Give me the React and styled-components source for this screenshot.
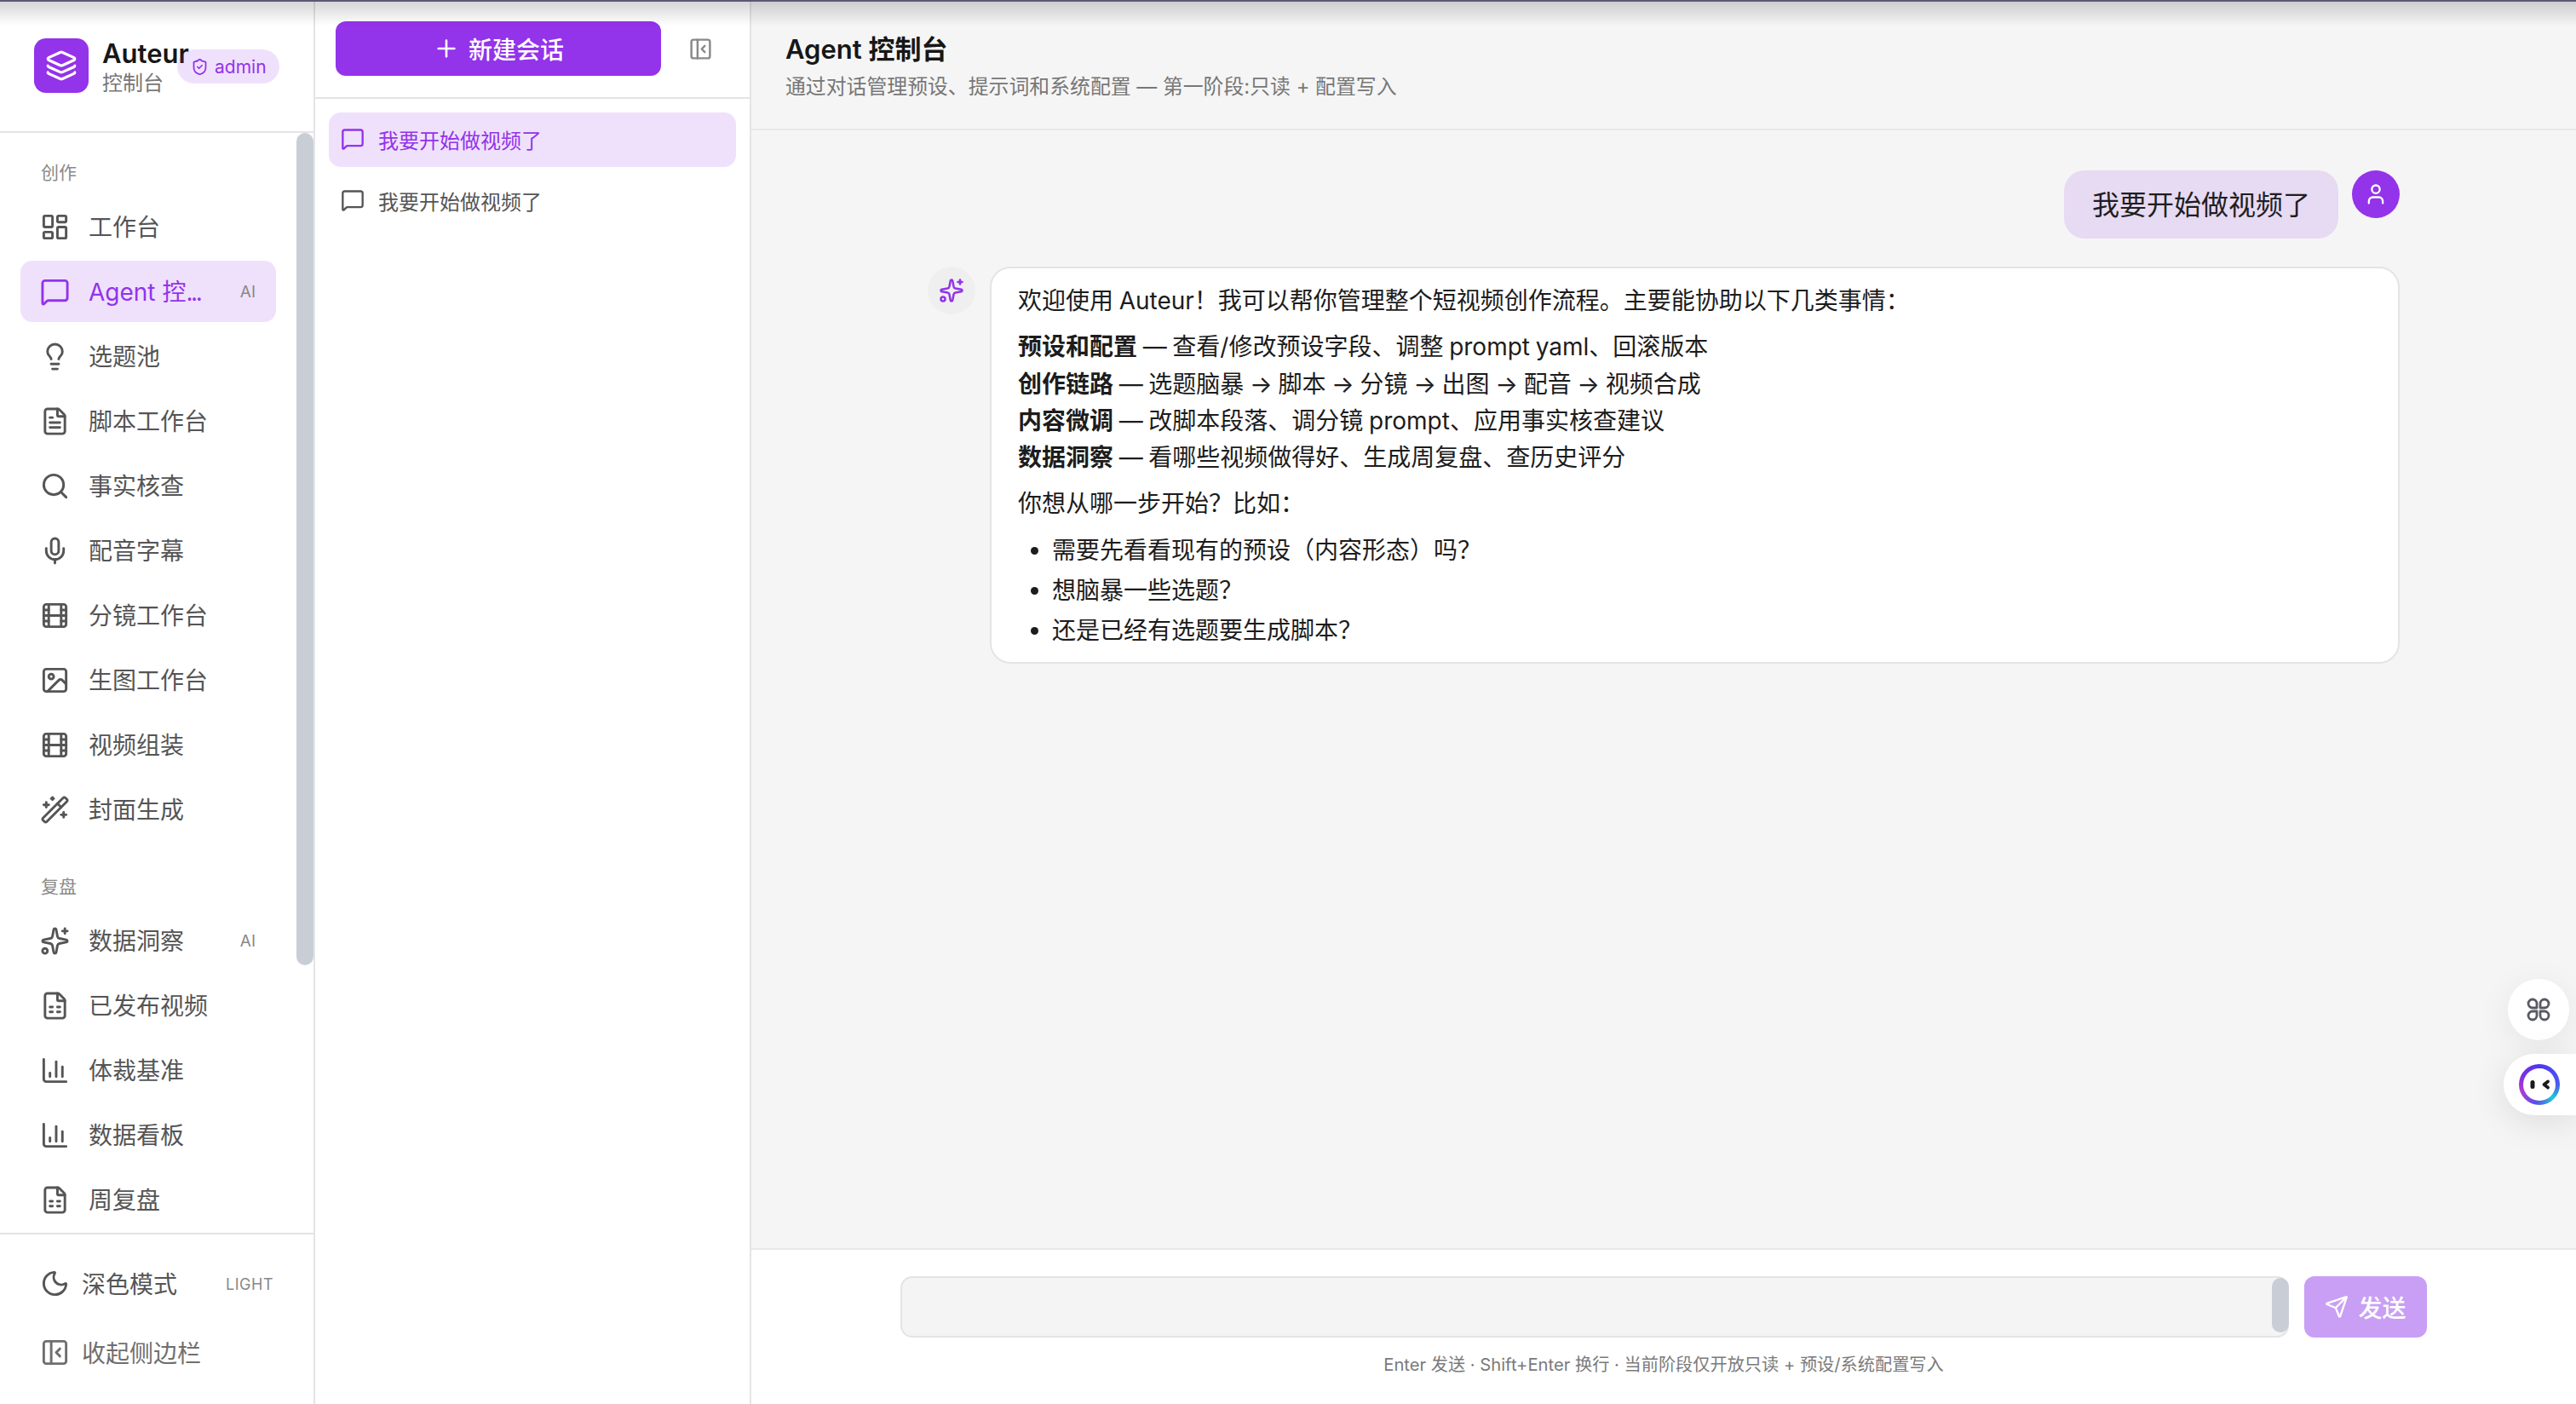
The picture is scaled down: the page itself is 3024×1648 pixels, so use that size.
import React from 'react'
import styled, { createGlobalStyle } from 'styled-components'
import {
  LayoutDashboard, MessageSquare, Lightbulb, FileText, Search, Mic, Film, Image as ImageIcon,
  WandSparkles, Sparkles, FileSpreadsheet, ChartColumn, Moon, PanelLeftClose, Plus, ShieldCheck,
  Layers, User, Send,
} from 'lucide-react'

const GlobalStyle = createGlobalStyle`
  html, body { margin: 0; height: 100%; }
  body {
    font-family: Inter, "Noto Sans CJK SC", sans-serif;
    color: #1a1a1a;
    background: #fff;
  }
  * { box-sizing: border-box; }
`

const Shell = styled.div`
  display: grid;
  grid-template-columns: 370px 512px 1fr;
  height: 100vh;
  overflow: hidden;
`

const TopShade = styled.div`
  position: fixed;
  top: 0;
  left: 0;
  right: 0;
  height: 30px;
  border-top: 2px solid #5d5878;
  background: linear-gradient(to bottom, rgba(0, 0, 0, 0.16), rgba(0, 0, 0, 0));
  pointer-events: none;
  z-index: 5;
`

/* left nav */
const Sidebar = styled.aside`
  display: flex;
  flex-direction: column;
  min-height: 0;
  background: #fff;
  border-right: 2px solid #e4e4e7;
`

const Brand = styled.div`
  display: flex;
  align-items: center;
  height: 156px;
  flex-shrink: 0;
  padding-left: 40px;
  border-bottom: 2px solid #e4e4e7;
`

const BrandTile = styled.div`
  display: flex;
  align-items: center;
  justify-content: center;
  width: 64px;
  height: 64px;
  border-radius: 14px;
  background: #9333ea;
  color: #fff;
  flex-shrink: 0;
`

const BrandText = styled.div`
  width: 88px;
  margin-left: 16px;
  padding-top: 6px;
  white-space: nowrap;
`

const BrandName = styled.div`
  font-size: 31px;
  line-height: 36px;
  font-weight: 600;
  color: #171717;
`

const BrandSub = styled.div`
  font-size: 24px;
  line-height: 34px;
  color: #777;
`

const RoleBadge = styled.div`
  display: flex;
  align-items: center;
  gap: 7px;
  height: 40px;
  padding: 0 15px 0 16px;
  margin-top: 2px;
  border-radius: 20px;
  background: rgba(147, 51, 234, 0.15);
  color: #9333ea;
  font-size: 21px;
`

const NavPane = styled.div`
  position: relative;
  flex: 1;
  min-height: 0;
  overflow: hidden;
`

const NavThumb = styled.div`
  position: absolute;
  top: 0;
  right: 0;
  width: 20px;
  height: 977px;
  border-radius: 10px;
  background: #c9ced6;
`

const Nav = styled.nav`
  padding: 33px 24px 0;
`

const GroupLabel = styled.div`
  height: 28px;
  margin: 0 0 13px 24px;
  font-size: 21px;
  line-height: 28px;
  color: #8a8a8a;
`

const NavGroup = styled.div`
  display: flex;
  flex-direction: column;
  gap: 4px;
  width: 300px;
  margin-bottom: 41px;
`

const NavItem = styled.a`
  display: flex;
  align-items: center;
  gap: 22px;
  height: 72px;
  padding: 0 24px 0 23px;
  border-radius: 14px;
  font-size: 28px;
  white-space: nowrap;
  color: ${p => (p.$active ? '#9333ea' : '#555')};
  background: ${p => (p.$active ? 'rgba(147, 51, 234, 0.15)' : 'transparent')};
  svg { flex-shrink: 0; }
`

const NavLabel = styled.span`
  flex: 1;
  padding-bottom: 2px;
`

const CutDots = styled.span`
  letter-spacing: -2.4px;
`

const AiTag = styled.span`
  font-size: 19px;
  color: #888;
`

const SideFooter = styled.div`
  display: flex;
  flex-direction: column;
  gap: 9px;
  flex-shrink: 0;
  height: 201px;
  padding: 21px 47px 0 24px;
  border-top: 2px solid #e4e4e7;
`

const FooterRow = styled.div`
  display: flex;
  align-items: center;
  gap: 14px;
  height: 72px;
  padding-left: 23px;
  font-size: 28px;
  white-space: nowrap;
  color: ${p => (p.$muted ? '#6f6f6f' : '#555')};
`

const ModeTag = styled.span`
  margin: 2px 0 0 auto;
  font-size: 18px;
  letter-spacing: 0.5px;
  color: #888;
`

/* session list */
const Sessions = styled.section`
  display: flex;
  flex-direction: column;
  min-height: 0;
  background: #fff;
  border-right: 2px solid #e4e4e7;
`

const SessionsHead = styled.div`
  display: flex;
  align-items: center;
  height: 116px;
  padding-left: 24px;
  gap: 32px;
  border-bottom: 2px solid #e4e4e7;
`

const NewChat = styled.button`
  display: flex;
  align-items: center;
  justify-content: center;
  gap: 10px;
  width: 382px;
  height: 64px;
  border: 0;
  border-radius: 12px;
  background: #9333ea;
  color: #fff;
  font: 500 28px Inter, "Noto Sans CJK SC", sans-serif;
`

const CollapseBtn = styled.span`
  display: flex;
  color: #888;
`

const SessionList = styled.div`
  display: flex;
  flex-direction: column;
  gap: 8px;
  padding: 16px 16px 0;
`

const SessionItem = styled.div`
  display: flex;
  align-items: center;
  gap: 16px;
  height: 64px;
  padding: 0 0 2px 14px;
  border-radius: 14px;
  font-size: 24px;
  color: ${p => (p.$active ? '#9333ea' : '#555')};
  background: ${p => (p.$active ? 'rgba(147, 51, 234, 0.15)' : 'transparent')};
`

/* chat */
const Main = styled.main`
  display: flex;
  flex-direction: column;
  min-width: 0;
  min-height: 0;
  background: #f5f5f5;
`

const MainHead = styled.header`
  display: flex;
  flex-direction: column;
  justify-content: center;
  height: 153px;
  flex-shrink: 0;
  padding: 7px 40px 0;
  background: #f5f5f5;
  border-bottom: 2px solid #e8e8ea;
`

const Title = styled.h1`
  margin: 0 0 2px;
  font-size: 31px;
  line-height: 44px;
  font-weight: 600;
  color: #171717;
`

const Subtitle = styled.p`
  margin: 0;
  font-size: 23.87px;
  line-height: 40px;
  color: #777;
`

const Thread = styled.div`
  flex: 1;
  min-height: 0;
  width: 1728px;
  margin: 0 auto;
  padding-top: 47px;
`

const UserRow = styled.div`
  display: flex;
  justify-content: flex-end;
  gap: 16px;
  margin-bottom: 33px;
`

const UserBubble = styled.div`
  height: 80px;
  padding: 2px 33px 0;
  border-radius: 24px;
  background: #e7daf3;
  font-size: 32px;
  line-height: 78px;
  color: #1f1f1f;
`

const Avatar = styled.div`
  display: flex;
  align-items: center;
  justify-content: center;
  width: 56px;
  height: 56px;
  flex-shrink: 0;
  border-radius: 50%;
  background: ${p => (p.$user ? '#9333ea' : '#efeff0')};
  color: ${p => (p.$user ? '#fff' : '#9333ea')};
`

const BotRow = styled.div`
  display: flex;
  gap: 17px;
`

const BotCard = styled.div`
  flex: 1;
  padding: 17px 31px 14px;
  border: 2px solid #e4e4e7;
  border-radius: 24px;
  background: #fff;
  font-size: 28px;
  line-height: 43.3px;
  word-spacing: -1.2px;
  color: #1c1c1c;

  strong { font-weight: 700; }
`

const Para = styled.p`
  margin: 0 0 11px;
`

const Bullets = styled.ul`
  margin: 0;
  padding-left: 40px;

  li { margin-bottom: 4px; }
  li:last-child { margin-bottom: 0; }
`

const Composer = styled.footer`
  flex-shrink: 0;
  height: 183px;
  padding-top: 31px;
  background: #fff;
  border-top: 2px solid #e8e8ea;
`

const ComposerRow = styled.div`
  display: flex;
  gap: 18px;
  width: 1792px;
  margin: 0 auto;
`

const InputBox = styled.div`
  position: relative;
  flex: 1;
  height: 72px;
  border: 2px solid #e4e4e7;
  border-radius: 14px;
  background: #f4f4f5;
`

const InputThumb = styled.div`
  position: absolute;
  top: 0;
  right: -2px;
  width: 20px;
  height: 64px;
  border-radius: 10px;
  background: #c9ced6;
`

const SendBtn = styled.button`
  display: flex;
  align-items: center;
  justify-content: center;
  gap: 11px;
  width: 144px;
  height: 72px;
  border: 0;
  border-radius: 12px;
  background: #c99ff5;
  color: #fff;
  font: 500 28px Inter, "Noto Sans CJK SC", sans-serif;
`

const Hint = styled.div`
  margin-top: 18px;
  font-size: 20.2px;
  line-height: 28px;
  text-align: center;
  color: #7a7a7a;
`

/* floating helpers on the right edge */
const FloatDock = styled.div`
  position: fixed;
  top: 1149px;
  right: 0;
  display: flex;
  flex-direction: column;
  align-items: flex-end;
  gap: 16px;
  z-index: 4;
`

const FloatCircle = styled.div`
  display: flex;
  align-items: center;
  justify-content: center;
  width: 72px;
  height: 72px;
  margin-right: 8px;
  border-radius: 50%;
  background: #fff;
  box-shadow: 0 8px 40px rgba(0, 0, 0, 0.07);
`

const FloatPill = styled.div`
  display: flex;
  align-items: center;
  width: 85px;
  height: 72px;
  padding-left: 18px;
  border-radius: 36px 0 0 36px;
  background: #fff;
  box-shadow: 0 8px 40px rgba(0, 0, 0, 0.1);
`

const BotRing = styled.div`
  display: flex;
  align-items: center;
  justify-content: center;
  width: 48px;
  height: 48px;
  border-radius: 50%;
  background: conic-gradient(#4f35f0 0deg, #4a5cf0 90deg, #1fc8dc 135deg, #5a4fe8 190deg, #b03cd0 250deg, #7a30e8 300deg, #4f35f0 360deg);
`

const BotFace = styled.div`
  display: flex;
  align-items: center;
  justify-content: center;
  width: 38px;
  height: 38px;
  border-radius: 50%;
  background: #fff;
`

const CloverIcon = () => (
  <svg width="30" height="30" viewBox="0 0 30 30" fill="none" stroke="#5a5a64" strokeWidth="2.8" strokeLinejoin="round">
    <path d="M13 13H8a5 5 0 1 1 5-5z" />
    <path d="M17 13h5a5 5 0 1 0-5-5z" />
    <path d="M13 17H8a5 5 0 1 0 5 5z" />
    <path d="M17 17h5a5 5 0 1 1-5 5z" />
  </svg>
)

const BotEyes = () => (
  <svg width="30" height="14" viewBox="0 0 30 14" fill="none" stroke="#1a1a1a" strokeLinecap="round" strokeLinejoin="round">
    <path d="M7 4.5v5" strokeWidth="5" />
    <path d="M25 3.5l-4.5 3.5 4.5 3.5" strokeWidth="3.8" />
  </svg>
)

const createNav = [
  { label: '工作台', icon: LayoutDashboard },
  { label: 'Agent 控', cut: true, icon: MessageSquare, active: true, ai: true },
  { label: '选题池', icon: Lightbulb },
  { label: '脚本工作台', icon: FileText },
  { label: '事实核查', icon: Search },
  { label: '配音字幕', icon: Mic },
  { label: '分镜工作台', icon: Film },
  { label: '生图工作台', icon: ImageIcon },
  { label: '视频组装', icon: Film },
  { label: '封面生成', icon: WandSparkles },
]

const reviewNav = [
  { label: '数据洞察', icon: Sparkles, ai: true },
  { label: '已发布视频', icon: FileSpreadsheet },
  { label: '体裁基准', icon: ChartColumn },
  { label: '数据看板', icon: ChartColumn },
  { label: '周复盘', icon: FileSpreadsheet },
]

const NavEntries = ({ items }) => (
  <NavGroup>
    {items.map(({ label, icon: Icon, active, ai, cut }) => (
      <NavItem key={label} $active={active}>
        <Icon size={35} strokeWidth={2} />
        <NavLabel>{label}{cut && <CutDots>...</CutDots>}</NavLabel>
        {ai && <AiTag>AI</AiTag>}
      </NavItem>
    ))}
  </NavGroup>
)

const App = () => (
  <>
    <GlobalStyle />
    <TopShade />
    <Shell>
      <Sidebar>
        <Brand>
          <BrandTile><Layers size={38} strokeWidth={2} /></BrandTile>
          <BrandText>
            <BrandName>Auteur</BrandName>
            <BrandSub>控制台</BrandSub>
          </BrandText>
          <RoleBadge><ShieldCheck size={21} strokeWidth={2} />admin</RoleBadge>
        </Brand>
        <NavPane>
          <Nav>
            <GroupLabel>创作</GroupLabel>
            <NavEntries items={createNav} />
            <GroupLabel>复盘</GroupLabel>
            <NavEntries items={reviewNav} />
          </Nav>
          <NavThumb />
        </NavPane>
        <SideFooter>
          <FooterRow>
            <Moon size={35} strokeWidth={2} />
            <span>深色模式</span>
            <ModeTag>LIGHT</ModeTag>
          </FooterRow>
          <FooterRow $muted>
            <PanelLeftClose size={35} strokeWidth={2} />
            <span>收起侧边栏</span>
          </FooterRow>
        </SideFooter>
      </Sidebar>

      <Sessions>
        <SessionsHead>
          <NewChat><Plus size={32} strokeWidth={2} />新建会话</NewChat>
          <CollapseBtn><PanelLeftClose size={29} strokeWidth={2} /></CollapseBtn>
        </SessionsHead>
        <SessionList>
          <SessionItem $active><MessageSquare size={28} strokeWidth={2} />我要开始做视频了</SessionItem>
          <SessionItem><MessageSquare size={28} strokeWidth={2} />我要开始做视频了</SessionItem>
        </SessionList>
      </Sessions>

      <Main>
        <MainHead>
          <Title>Agent 控制台</Title>
          <Subtitle>通过对话管理预设、提示词和系统配置 — 第一阶段:只读 + 配置写入</Subtitle>
        </MainHead>
        <Thread>
          <UserRow>
            <UserBubble>我要开始做视频了</UserBubble>
            <Avatar $user><User size={28} strokeWidth={2} /></Avatar>
          </UserRow>
          <BotRow>
            <Avatar><Sparkles size={30} strokeWidth={2} /></Avatar>
            <BotCard>
              <Para>欢迎使用 Auteur！我可以帮你管理整个短视频创作流程。主要能协助以下几类事情：</Para>
              <Para>
                <strong>预设和配置</strong> — 查看/修改预设字段、调整 prompt yaml、回滚版本<br />
                <strong>创作链路</strong> — 选题脑暴 → 脚本 → 分镜 → 出图 → 配音 → 视频合成<br />
                <strong>内容微调</strong> — 改脚本段落、调分镜 prompt、应用事实核查建议<br />
                <strong>数据洞察</strong> — 看哪些视频做得好、生成周复盘、查历史评分
              </Para>
              <Para>你想从哪一步开始？比如：</Para>
              <Bullets>
                <li>需要先看看现有的预设（内容形态）吗？</li>
                <li>想脑暴一些选题？</li>
                <li>还是已经有选题要生成脚本？</li>
              </Bullets>
            </BotCard>
          </BotRow>
        </Thread>
        <Composer>
          <ComposerRow>
            <InputBox><InputThumb /></InputBox>
            <SendBtn><Send size={28} strokeWidth={2} />发送</SendBtn>
          </ComposerRow>
          <Hint>Enter 发送 · Shift+Enter 换行 · 当前阶段仅开放只读 + 预设/系统配置写入</Hint>
        </Composer>
      </Main>
    </Shell>

    <FloatDock>
      <FloatCircle><CloverIcon /></FloatCircle>
      <FloatPill>
        <BotRing><BotFace><BotEyes /></BotFace></BotRing>
      </FloatPill>
    </FloatDock>
  </>
)

export default App
